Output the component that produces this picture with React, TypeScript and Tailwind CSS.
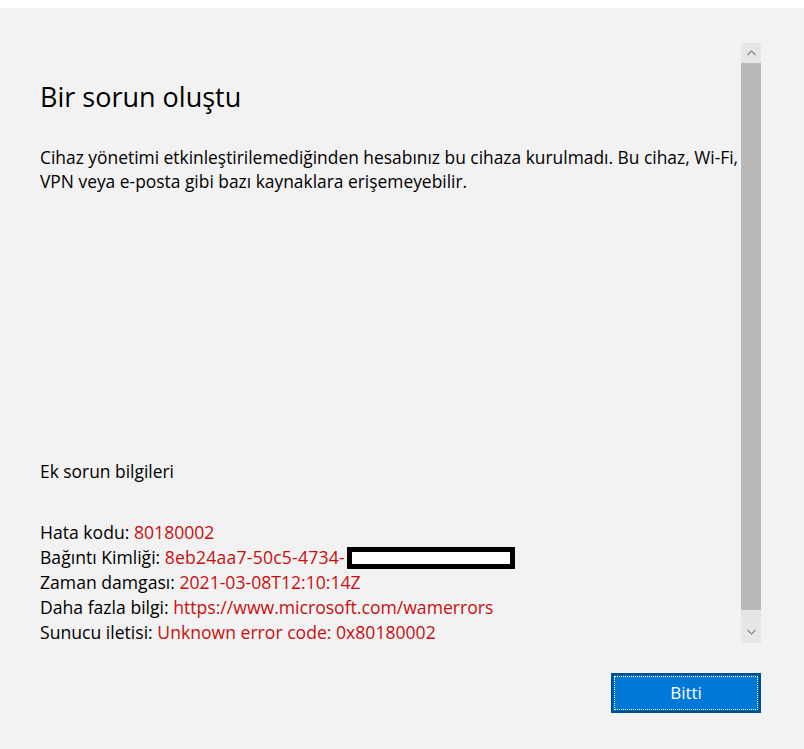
import React from "react";

export default function App() {
  const font = { fontFamily: '"Open Sans", "Noto Sans", sans-serif' };
  return (
    <div className="w-[804px] h-[749px] bg-white pt-[8px] overflow-hidden" style={font}>
      <div className="h-[741px] bg-[#f2f2f2] flex flex-col">
        <div className="flex flex-row h-[635px]">
          <div className="flex-1 overflow-hidden pl-[40px] text-black">
            <div className="mt-[71px] text-[27px] leading-[36px] whitespace-nowrap">Bir sorun oluştu</div>
            <div className="mt-[30px] text-[17.4px] leading-[24px] whitespace-nowrap">
              <div>Cihaz yönetimi etkinleştirilemediğinden hesabınız bu cihaza kurulmadı. Bu cihaz, Wi-Fi,</div>
              <div>VPN veya e-posta gibi bazı kaynaklara erişemeyebilir.</div>
            </div>
            <div className="mt-[266px] text-[17.4px] leading-[24px]">Ek sorun bilgileri</div>
            <div className="mt-[37px] text-[17.6px] leading-[25px] whitespace-nowrap">
              <div>
                Hata kodu: <span className="text-[#c80f0f]">80180002</span>
              </div>
              <div className="flex items-center">
                <span>Bağıntı Kimliği:&nbsp;</span>
                <span className="text-[#c80f0f] tracking-[0.2px]">8eb24aa7-50c5-4734-</span>
                <span className="inline-block w-[168px] h-[22px] ml-[2px] border-[5px] border-black bg-white"></span>
              </div>
              <div>
                Zaman damgası: <span className="text-[#c80f0f]">2021-03-08T12:10:14Z</span>
              </div>
              <div>
                Daha fazla bilgi: <span className="text-[#c80f0f]">https://www.microsoft.com/wamerrors</span>
              </div>
              <div>
                Sunucu iletisi: <span className="text-[#c80f0f]">Unknown error code: 0x80180002</span>
              </div>
            </div>
          </div>
          <div className="w-[20px] mr-[43px] mt-[35px] h-[600px] flex flex-col">
            <div className="h-[20px] bg-[#e6e6e6] flex items-center justify-center">
              <svg width="9" height="6" viewBox="0 0 9 6">
                <path d="M0.5 5 L4.5 1 L8.5 5" fill="none" stroke="#858585" strokeWidth="1.2" />
              </svg>
            </div>
            <div className="flex-1 bg-[#b9b9b9]"></div>
            <div className="h-[33px] bg-[#e6e6e6] flex items-end justify-center pb-[8px]">
              <svg width="9" height="6" viewBox="0 0 9 6">
                <path d="M0.5 1 L4.5 5 L8.5 1" fill="none" stroke="#858585" strokeWidth="1.2" />
              </svg>
            </div>
          </div>
        </div>
        <div className="flex flex-row justify-end pr-[43px] mt-[30px]">
          <div className="w-[150px] h-[40px] border-2 border-[#004f8e] bg-[#0066b6] p-[1px]">
            <div className="w-full h-full border border-dotted border-white bg-[#0078d7] flex items-center justify-center text-white text-[17px]">
              Bitti
            </div>
          </div>
        </div>
      </div>
    </div>
  );
}
